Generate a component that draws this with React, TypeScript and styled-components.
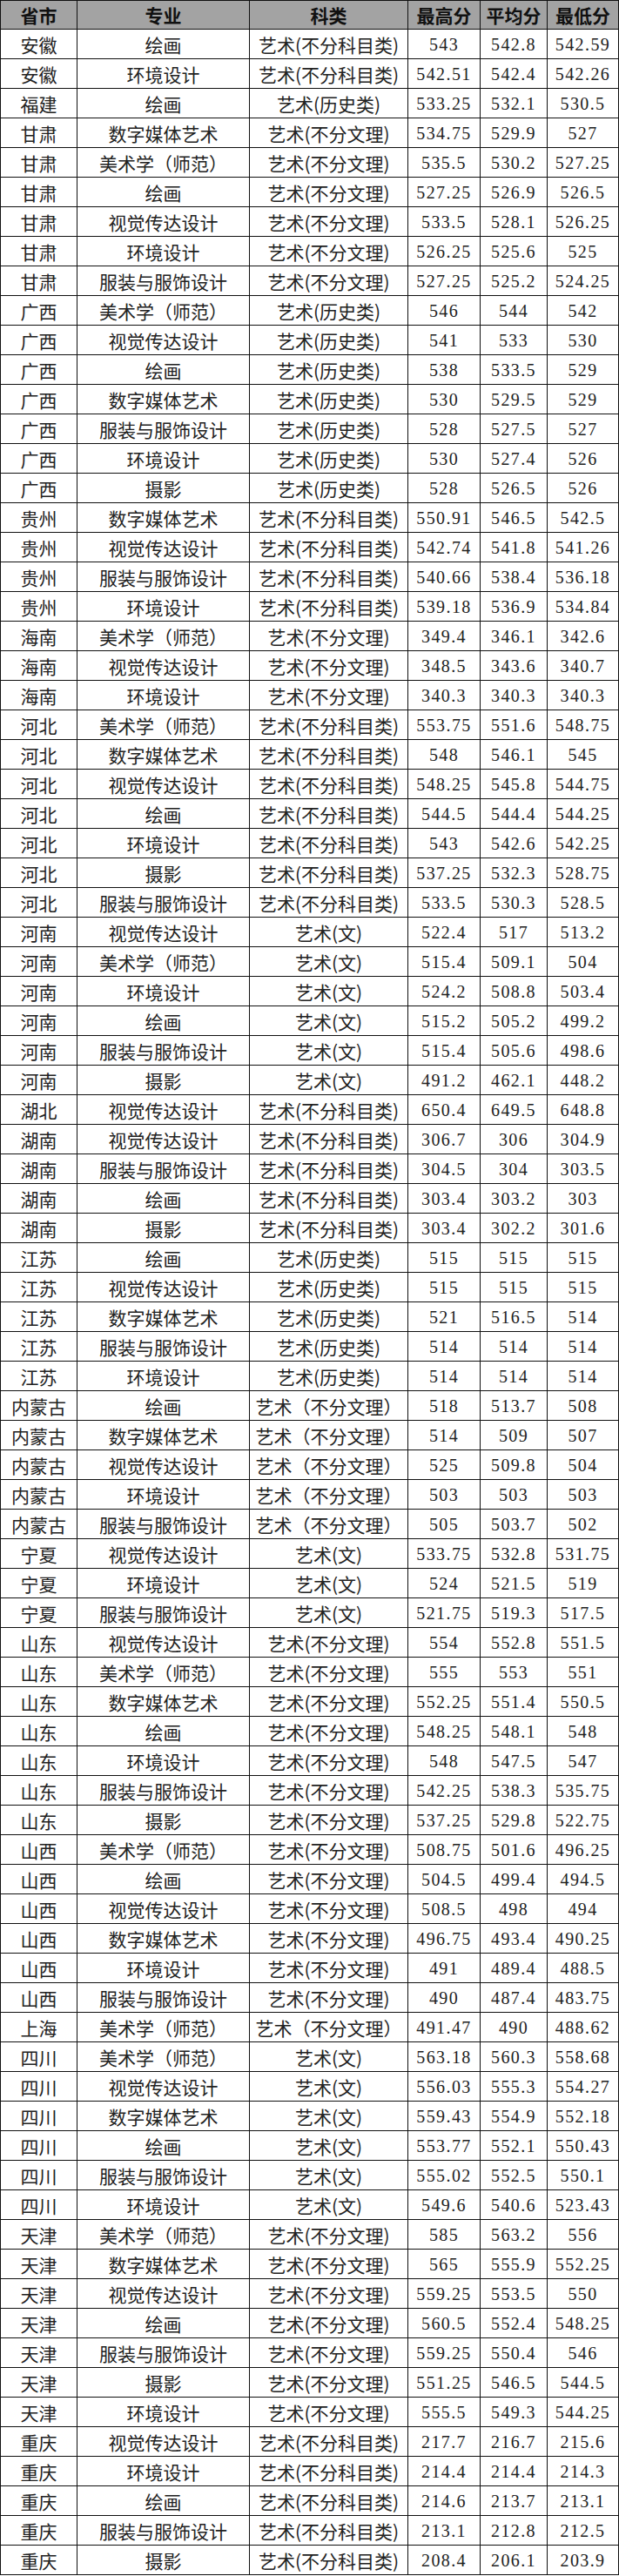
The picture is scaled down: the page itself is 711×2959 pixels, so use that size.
import React from 'react';
import styled, { createGlobalStyle } from 'styled-components';

const GlobalStyle = createGlobalStyle`
  html, body {
    margin: 0;
    padding: 0;
    background: #fff;
  }
`;

type Row = [string, string, string, string, string, string];

const rows: Row[] = [
  ['安徽', '绘画', '艺术(不分科目类)', '543', '542.8', '542.59'],
  ['安徽', '环境设计', '艺术(不分科目类)', '542.51', '542.4', '542.26'],
  ['福建', '绘画', '艺术(历史类)', '533.25', '532.1', '530.5'],
  ['甘肃', '数字媒体艺术', '艺术(不分文理)', '534.75', '529.9', '527'],
  ['甘肃', '美术学（师范）', '艺术(不分文理)', '535.5', '530.2', '527.25'],
  ['甘肃', '绘画', '艺术(不分文理)', '527.25', '526.9', '526.5'],
  ['甘肃', '视觉传达设计', '艺术(不分文理)', '533.5', '528.1', '526.25'],
  ['甘肃', '环境设计', '艺术(不分文理)', '526.25', '525.6', '525'],
  ['甘肃', '服装与服饰设计', '艺术(不分文理)', '527.25', '525.2', '524.25'],
  ['广西', '美术学（师范）', '艺术(历史类)', '546', '544', '542'],
  ['广西', '视觉传达设计', '艺术(历史类)', '541', '533', '530'],
  ['广西', '绘画', '艺术(历史类)', '538', '533.5', '529'],
  ['广西', '数字媒体艺术', '艺术(历史类)', '530', '529.5', '529'],
  ['广西', '服装与服饰设计', '艺术(历史类)', '528', '527.5', '527'],
  ['广西', '环境设计', '艺术(历史类)', '530', '527.4', '526'],
  ['广西', '摄影', '艺术(历史类)', '528', '526.5', '526'],
  ['贵州', '数字媒体艺术', '艺术(不分科目类)', '550.91', '546.5', '542.5'],
  ['贵州', '视觉传达设计', '艺术(不分科目类)', '542.74', '541.8', '541.26'],
  ['贵州', '服装与服饰设计', '艺术(不分科目类)', '540.66', '538.4', '536.18'],
  ['贵州', '环境设计', '艺术(不分科目类)', '539.18', '536.9', '534.84'],
  ['海南', '美术学（师范）', '艺术(不分文理)', '349.4', '346.1', '342.6'],
  ['海南', '视觉传达设计', '艺术(不分文理)', '348.5', '343.6', '340.7'],
  ['海南', '环境设计', '艺术(不分文理)', '340.3', '340.3', '340.3'],
  ['河北', '美术学（师范）', '艺术(不分科目类)', '553.75', '551.6', '548.75'],
  ['河北', '数字媒体艺术', '艺术(不分科目类)', '548', '546.1', '545'],
  ['河北', '视觉传达设计', '艺术(不分科目类)', '548.25', '545.8', '544.75'],
  ['河北', '绘画', '艺术(不分科目类)', '544.5', '544.4', '544.25'],
  ['河北', '环境设计', '艺术(不分科目类)', '543', '542.6', '542.25'],
  ['河北', '摄影', '艺术(不分科目类)', '537.25', '532.3', '528.75'],
  ['河北', '服装与服饰设计', '艺术(不分科目类)', '533.5', '530.3', '528.5'],
  ['河南', '视觉传达设计', '艺术(文)', '522.4', '517', '513.2'],
  ['河南', '美术学（师范）', '艺术(文)', '515.4', '509.1', '504'],
  ['河南', '环境设计', '艺术(文)', '524.2', '508.8', '503.4'],
  ['河南', '绘画', '艺术(文)', '515.2', '505.2', '499.2'],
  ['河南', '服装与服饰设计', '艺术(文)', '515.4', '505.6', '498.6'],
  ['河南', '摄影', '艺术(文)', '491.2', '462.1', '448.2'],
  ['湖北', '视觉传达设计', '艺术(不分科目类)', '650.4', '649.5', '648.8'],
  ['湖南', '视觉传达设计', '艺术(不分科目类)', '306.7', '306', '304.9'],
  ['湖南', '服装与服饰设计', '艺术(不分科目类)', '304.5', '304', '303.5'],
  ['湖南', '绘画', '艺术(不分科目类)', '303.4', '303.2', '303'],
  ['湖南', '摄影', '艺术(不分科目类)', '303.4', '302.2', '301.6'],
  ['江苏', '绘画', '艺术(历史类)', '515', '515', '515'],
  ['江苏', '视觉传达设计', '艺术(历史类)', '515', '515', '515'],
  ['江苏', '数字媒体艺术', '艺术(历史类)', '521', '516.5', '514'],
  ['江苏', '服装与服饰设计', '艺术(历史类)', '514', '514', '514'],
  ['江苏', '环境设计', '艺术(历史类)', '514', '514', '514'],
  ['内蒙古', '绘画', '艺术（不分文理）', '518', '513.7', '508'],
  ['内蒙古', '数字媒体艺术', '艺术（不分文理）', '514', '509', '507'],
  ['内蒙古', '视觉传达设计', '艺术（不分文理）', '525', '509.8', '504'],
  ['内蒙古', '环境设计', '艺术（不分文理）', '503', '503', '503'],
  ['内蒙古', '服装与服饰设计', '艺术（不分文理）', '505', '503.7', '502'],
  ['宁夏', '视觉传达设计', '艺术(文)', '533.75', '532.8', '531.75'],
  ['宁夏', '环境设计', '艺术(文)', '524', '521.5', '519'],
  ['宁夏', '服装与服饰设计', '艺术(文)', '521.75', '519.3', '517.5'],
  ['山东', '视觉传达设计', '艺术(不分文理)', '554', '552.8', '551.5'],
  ['山东', '美术学（师范）', '艺术(不分文理)', '555', '553', '551'],
  ['山东', '数字媒体艺术', '艺术(不分文理)', '552.25', '551.4', '550.5'],
  ['山东', '绘画', '艺术(不分文理)', '548.25', '548.1', '548'],
  ['山东', '环境设计', '艺术(不分文理)', '548', '547.5', '547'],
  ['山东', '服装与服饰设计', '艺术(不分文理)', '542.25', '538.3', '535.75'],
  ['山东', '摄影', '艺术(不分文理)', '537.25', '529.8', '522.75'],
  ['山西', '美术学（师范）', '艺术(不分文理)', '508.75', '501.6', '496.25'],
  ['山西', '绘画', '艺术(不分文理)', '504.5', '499.4', '494.5'],
  ['山西', '视觉传达设计', '艺术(不分文理)', '508.5', '498', '494'],
  ['山西', '数字媒体艺术', '艺术(不分文理)', '496.75', '493.4', '490.25'],
  ['山西', '环境设计', '艺术(不分文理)', '491', '489.4', '488.5'],
  ['山西', '服装与服饰设计', '艺术(不分文理)', '490', '487.4', '483.75'],
  ['上海', '美术学（师范）', '艺术（不分文理）', '491.47', '490', '488.62'],
  ['四川', '美术学（师范）', '艺术(文)', '563.18', '560.3', '558.68'],
  ['四川', '视觉传达设计', '艺术(文)', '556.03', '555.3', '554.27'],
  ['四川', '数字媒体艺术', '艺术(文)', '559.43', '554.9', '552.18'],
  ['四川', '绘画', '艺术(文)', '553.77', '552.1', '550.43'],
  ['四川', '服装与服饰设计', '艺术(文)', '555.02', '552.5', '550.1'],
  ['四川', '环境设计', '艺术(文)', '549.6', '540.6', '523.43'],
  ['天津', '美术学（师范）', '艺术(不分文理)', '585', '563.2', '556'],
  ['天津', '数字媒体艺术', '艺术(不分文理)', '565', '555.9', '552.25'],
  ['天津', '视觉传达设计', '艺术(不分文理)', '559.25', '553.5', '550'],
  ['天津', '绘画', '艺术(不分文理)', '560.5', '552.4', '548.25'],
  ['天津', '服装与服饰设计', '艺术(不分文理)', '559.25', '550.4', '546'],
  ['天津', '摄影', '艺术(不分文理)', '551.25', '546.5', '544.5'],
  ['天津', '环境设计', '艺术(不分文理)', '555.5', '549.3', '544.25'],
  ['重庆', '视觉传达设计', '艺术(不分科目类)', '217.7', '216.7', '215.6'],
  ['重庆', '环境设计', '艺术(不分科目类)', '214.4', '214.4', '214.3'],
  ['重庆', '绘画', '艺术(不分科目类)', '214.6', '213.7', '213.1'],
  ['重庆', '服装与服饰设计', '艺术(不分科目类)', '213.1', '212.8', '212.5'],
  ['重庆', '摄影', '艺术(不分科目类)', '208.4', '206.1', '203.9'],
];

const headers = ['省市', '专业', '科类', '最高分', '平均分', '最低分'];

const Sheet = styled.div`
  display: grid;
  grid-template-columns: 88px 198px 182px 83px 77px 82px;
  grid-template-rows: 33px;
  grid-auto-rows: 34px;
  width: 711px;
  box-sizing: border-box;
  border-top: 1px solid #111;
  border-left: 1px solid #111;
  background: #fff;
`;

const Line = styled.div`
  display: contents;
`;

const HeadCell = styled.div`
  display: flex;
  align-items: center;
  justify-content: center;
  box-sizing: border-box;
  border-right: 1px solid #111;
  border-bottom: 1px solid #111;
  background: #a3a3a3;
  color: #111;
  font-family: 'Noto Sans CJK SC', sans-serif;
  font-size: 21px;
  font-weight: 700;
  white-space: nowrap;
  overflow: hidden;
`;

const Cell = styled.div<{ $num?: boolean }>`
  display: flex;
  align-items: center;
  justify-content: center;
  box-sizing: border-box;
  border-right: 1px solid #111;
  border-bottom: 1px solid #111;
  color: #222;
  font-family: ${(p) =>
    p.$num
      ? "'Liberation Serif', 'Noto Sans CJK SC', serif"
      : "'Noto Sans CJK SC', sans-serif"};
  font-size: ${(p) => (p.$num ? '20px' : '21px')};
  letter-spacing: ${(p) => (p.$num ? '1.4px' : '0')};
  font-weight: 400;
  white-space: nowrap;
  overflow: hidden;
  padding-top: 1px;
`;

const App: React.FC = () => {
  return (
    <>
      <GlobalStyle />
      <Sheet>
        <Line>
          {headers.map((h) => (
            <HeadCell key={h}>{h}</HeadCell>
          ))}
        </Line>
        {rows.map((r, i) => (
          <Line key={i}>
            {r.map((v, j) => (
              <Cell key={j} $num={j >= 3}>
                {v}
              </Cell>
            ))}
          </Line>
        ))}
      </Sheet>
    </>
  );
};

export default App;
